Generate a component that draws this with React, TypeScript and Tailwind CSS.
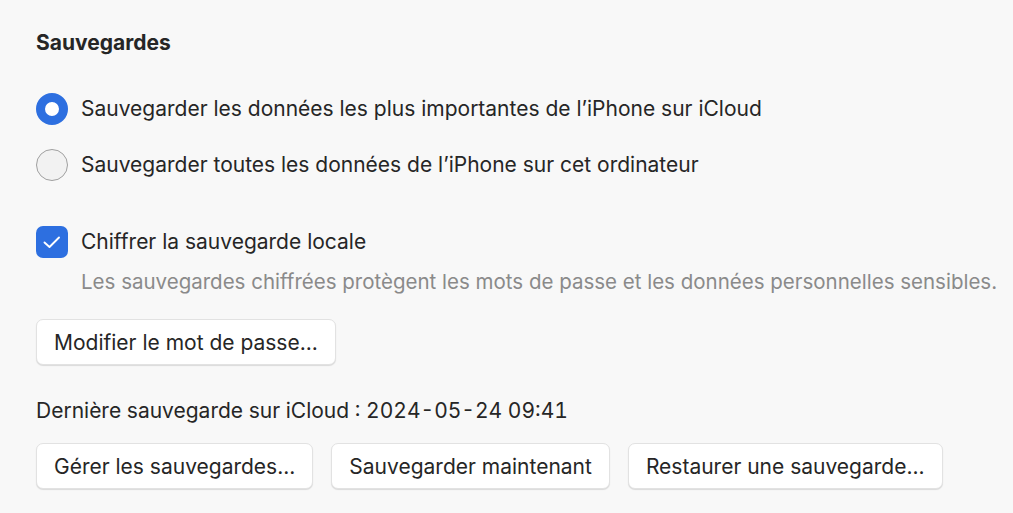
import React from "react";

const font = { fontFamily: "Inter, 'Noto Sans', sans-serif" };

function Btn({ children }: { children: React.ReactNode }) {
  return (
    <button className="h-[46px] px-[17px] rounded-[7px] bg-white border border-[#e2e2e2] shadow-[0_1px_1px_rgba(0,0,0,0.12)] text-[21px] text-[#262626] leading-none">
      {children}
    </button>
  );
}

export default function App() {
  return (
    <div className="w-[1013px] h-[513px] bg-[#f8f8f8] overflow-hidden" style={font}>
      <div className="pl-[36px] pt-[29px] flex flex-col text-[#262626]">
        <div className="h-[28px] leading-[28px] text-[21px] font-bold">Sauvegardes</div>

        <div className="mt-[36px] flex items-center h-[32px] gap-[13px]">
          <span className="w-[32px] h-[32px] rounded-full border-[9px] border-[#2d6fe0] bg-white box-border" />
          <span className="text-[21px]">Sauvegarder les données les plus importantes de l’iPhone sur iCloud</span>
        </div>

        <div className="mt-[24px] flex items-center h-[32px] gap-[13px]">
          <span className="w-[32px] h-[32px] rounded-full border border-[#a0a0a0] bg-[#f2f2f2] box-border" />
          <span className="text-[21px]">Sauvegarder toutes les données de l’iPhone sur cet ordinateur</span>
        </div>

        <div className="mt-[45px] flex items-center h-[32px] gap-[13px]">
          <span className="w-[32px] h-[32px] rounded-[7px] bg-[#2d6fe0] flex items-center justify-center">
            <svg width="20" height="20" viewBox="0 0 20 20" fill="none">
              <path d="M2.5 10.5 L7.5 15 L17 5.5" stroke="white" strokeWidth="1.9" strokeLinecap="round" strokeLinejoin="round" />
            </svg>
          </span>
          <span className="text-[21px]">Chiffrer la sauvegarde locale</span>
        </div>

        <div className="mt-[12px] pl-[45px] h-[24px] leading-[24px] text-[20.5px] text-[#8a8a8a]">
          Les sauvegardes chiffrées protègent les mots de passe et les données personnelles sensibles.
        </div>

        <div className="mt-[25px] flex">
          <Btn>Modifier le mot de passe...</Btn>
        </div>

        <div className="mt-[34px] h-[24px] leading-[24px] text-[21px] tabular-nums">
          Dernière sauvegarde sur iCloud : 2024-05-24 09:41
        </div>

        <div className="mt-[20px] flex gap-[18px]">
          <Btn>Gérer les sauvegardes...</Btn>
          <Btn>Sauvegarder maintenant</Btn>
          <Btn>Restaurer une sauvegarde...</Btn>
        </div>
      </div>
    </div>
  );
}
